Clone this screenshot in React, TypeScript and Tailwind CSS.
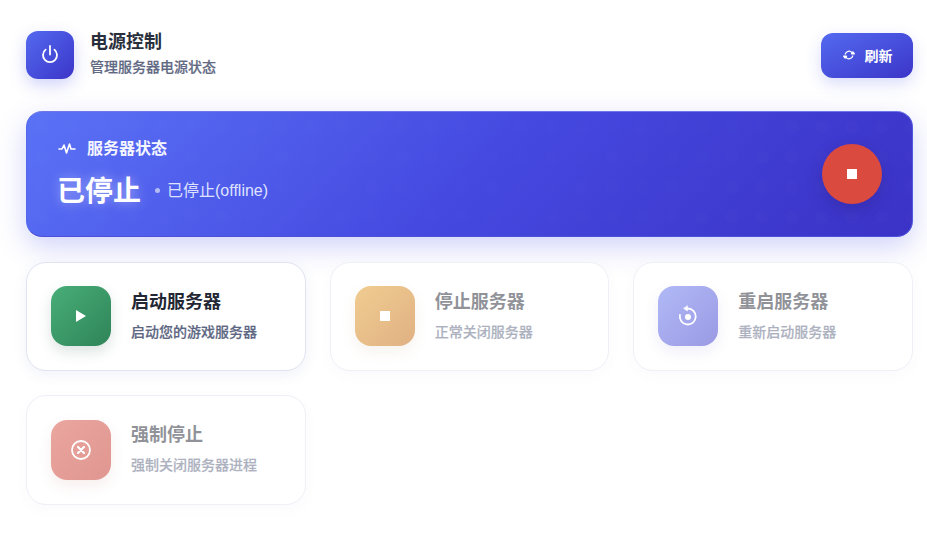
import React from "react";

const font = { fontFamily: '"Inter", "Noto Sans CJK SC", sans-serif' };

function Card({ title, desc, disabled, active, grad, shadow, icon }: { title: string; desc: string; disabled?: boolean; active?: boolean; grad: string; shadow: string; icon: React.ReactNode }) {
  return (
    <div className={`flex h-[109.5px] items-center gap-5 rounded-[20px] border bg-white pl-6 pr-6 ${active ? "border-[#e0e3f1] shadow-[0_4px_14px_rgba(80,90,180,0.08)]" : "border-[#eef0f6] shadow-[0_4px_14px_rgba(80,90,180,0.03)]"}`}>
      <div className={`flex h-[60px] w-[60px] shrink-0 items-center justify-center rounded-2xl ${grad} ${shadow}`}>{icon}</div>
      <div className={`-mt-[2px] flex min-w-0 flex-col gap-[7px] ${disabled ? "opacity-50" : ""}`}>
        <div className="text-[18px] font-semibold leading-[26px] text-[#232734]">{title}</div>
        <div className="text-[14px] font-medium leading-[20px] text-[#5c6682] [-webkit-text-stroke:0.2px]">{desc}</div>
      </div>
    </div>
  );
}

export default function App() {
  return (
    <div style={font} className="min-h-[557px] w-[927px] overflow-hidden bg-white pb-[52px] pl-[26px] pr-[14px] pt-[31px]">
      <div className="flex items-center justify-between">
        <div className="flex items-center gap-4">
          <div className="flex h-12 w-12 items-center justify-center rounded-xl bg-gradient-to-br from-[#5469f0] to-[#3c34c8] shadow-[0_6px_16px_rgba(70,80,230,0.25)]">
            <svg width="18" height="20" viewBox="0 0 18 20" fill="none" stroke="white" strokeWidth="1.8" strokeLinecap="round">
              <path d="M9 1V9.5" />
              <path d="M13.4 4.6a7 7 0 1 1-8.8 0" />
            </svg>
          </div>
          <div className="-mt-[4px] flex flex-col gap-[2px]">
            <div className="text-[18px] font-semibold leading-[26px] text-[#2a2f3c]">电源控制</div>
            <div className="text-[14px] font-medium leading-5 text-[#5f6983] [-webkit-text-stroke:0.2px]">管理服务器电源状态</div>
          </div>
        </div>
        <div className="flex h-[45px] w-[92px] items-center justify-center gap-[9px] rounded-xl bg-gradient-to-br from-[#5469f0] to-[#3c34c8] text-[14px] font-semibold text-white shadow-[0_6px_16px_rgba(70,80,230,0.2)]">
          <svg width="14" height="14" viewBox="0 0 14 14" fill="none" stroke="white" strokeWidth="1.2" strokeLinecap="round" strokeLinejoin="round">
            <path d="M3.2 6.2A3.9 3.9 0 0 1 10 4.6" />
            <path d="M10.8 7.8A3.9 3.9 0 0 1 4 9.4" />
            <path d="M9.4 5.8h3l-1.5-2z" fill="white" />
            <path d="M4.6 8.2h-3l1.5 2z" fill="white" />
          </svg>
          <span>刷新</span>
        </div>
      </div>

      <div className="mt-8 flex h-[126px] items-center justify-between rounded-2xl border border-t-[#6f76e8] border-r-[#5058dc] border-b-[#4c50d8] border-l-[#5468ee] bg-[radial-gradient(circle,rgba(255,255,255,0.007)_6px,transparent_7px),linear-gradient(135deg,#5a72f6_0%,#4549e0_50%,#3b32c6_100%)] bg-[length:30px_30px,100%_100%] pl-[31px] pr-[30px] shadow-[0_10px_28px_rgba(70,80,230,0.25)]">
        <div className="flex flex-col gap-[12px]">
          <div className="-mt-[3px] flex items-center gap-[11px] text-[16px] font-semibold leading-[24px] text-[#f4f5ff]">
            <svg width="18" height="14" viewBox="0 0 18 14" fill="none" stroke="white" strokeWidth="1.6" strokeLinecap="round" strokeLinejoin="round">
              <path d="M1 8h3l2-4 2.5 8 3-9 1.5 5h4" />
            </svg>
            <span>服务器状态</span>
          </div>
          <div className="flex items-center">
            <span className="-ml-[1px] text-[28px] font-bold leading-[38px] text-white [text-shadow:0_0_12px_rgba(255,255,255,0.45)]">已停止</span>
            <span className="ml-[14px] h-[5px] w-[5px] rounded-full bg-[#b4bcf6]" />
            <span className="ml-[7px] text-[16px] leading-6 text-[#dfe2ff]" style={{ fontFamily: '"Liberation Sans", "Noto Sans CJK SC", sans-serif' }}>已停止(offline)</span>
          </div>
        </div>
        <div className="flex h-[60px] w-[60px] items-center justify-center rounded-full bg-[#da4a3f] shadow-[0_6px_16px_rgba(40,30,120,0.3)]">
          <div className="h-[10px] w-[10px] bg-white" />
        </div>
      </div>

      <div className="mt-[24.5px] grid grid-cols-3 gap-6">
        <Card
          active
          title="启动服务器"
          desc="启动您的游戏服务器"
          grad="bg-gradient-to-br from-[#48ae78] to-[#2f8458]"
          shadow="shadow-[0_6px_14px_rgba(40,90,70,0.16)]"
          icon={<svg width="12" height="14" viewBox="0 0 12 14"><path d="M1 1 11 7 1 13z" fill="white" /></svg>}
        />
        <Card
          disabled
          title="停止服务器"
          desc="正常关闭服务器"
          grad="bg-gradient-to-br from-[#f0cc90] to-[#e0b183]"
          shadow="shadow-[0_6px_14px_rgba(180,140,80,0.1)]"
          icon={<div className="h-[10px] w-[10px] bg-white" />}
        />
        <Card
          disabled
          title="重启服务器"
          desc="重新启动服务器"
          grad="bg-gradient-to-br from-[#b1b9f6] to-[#9a9ae4]"
          shadow="shadow-[0_6px_14px_rgba(100,100,200,0.1)]"
          icon={
            <svg width="20" height="22" viewBox="0 0 20 22" fill="none" stroke="white" strokeWidth="1.8" strokeLinecap="round">
              <path d="M9.5 3.5a8 8 0 1 1-7.6 6.5" />
              <path d="M9.4 1v5L5.8 3.5z" fill="white" strokeWidth="0.6" strokeLinejoin="round" />
              <circle cx="10" cy="12" r="3" fill="white" stroke="none" />
            </svg>
          }
        />
        <Card
          disabled
          title="强制停止"
          desc="强制关闭服务器进程"
          grad="bg-gradient-to-br from-[#eaa69f] to-[#e09690]"
          shadow="shadow-[0_6px_14px_rgba(180,90,80,0.1)]"
          icon={
            <svg width="20" height="20" viewBox="0 0 20 20" fill="none" stroke="white" strokeWidth="1.8" strokeLinecap="round">
              <circle cx="10" cy="10" r="9" />
              <path d="M7 7l6 6M13 7l-6 6" strokeWidth="2.2" />
            </svg>
          }
        />
      </div>
    </div>
  );
}
